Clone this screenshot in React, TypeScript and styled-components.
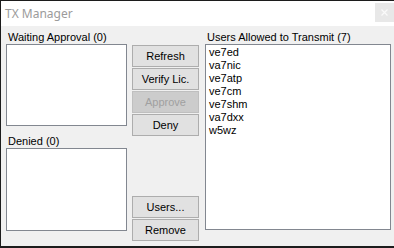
import React from 'react'
import styled, { createGlobalStyle } from 'styled-components'

const Global = createGlobalStyle`
  html, body {
    margin: 0;
    padding: 0;
    background: #f0f0f0;
  }
`

const Window = styled.div`
  width: 394px;
  height: 248px;
  box-sizing: border-box;
  border-top: 1px solid #1c1c1c;
  border-left: 1px solid #1c1c1c;
  border-bottom: 2px solid #1c1c1c;
  display: flex;
  flex-direction: column;
  font-family: 'Liberation Sans', Arial, sans-serif;
  font-size: 11px;
  color: #000;
  overflow: hidden;
`

const TitleBar = styled.div`
  height: 25px;
  background: #fff;
  display: flex;
  align-items: flex-start;
  justify-content: space-between;
`

const Title = styled.div`
  font-family: 'Segoe UI', 'Noto Sans', sans-serif;
  font-size: 12px;
  color: #9b9b9b;
  padding-left: 4px;
  line-height: 25px;
`

const CloseButton = styled.div`
  width: 19px;
  height: 19px;
  margin-top: 2px;
  background: #e8e8e8;
  display: flex;
  align-items: center;
  justify-content: center;
`

const Body = styled.div`
  flex: 1;
  background: #f0f0f0;
  display: grid;
  grid-template-columns: 121px 68px 186px;
  column-gap: 5px;
  padding: 5px 0 0 5px;
`

const Column = styled.div`
  display: flex;
  flex-direction: column;
`

const Label = styled.div<{ $gap?: number }>`
  height: 13px;
  line-height: 13px;
  padding-left: 2px;
  margin-top: ${(p) => p.$gap ?? 0}px;
  white-space: nowrap;
`

const ListBox = styled.div<{ $h: number }>`
  height: ${(p) => p.$h}px;
  box-sizing: border-box;
  background: #fff;
  border: 1px solid #828790;
  padding: 1px 3px;
`

const Item = styled.div`
  line-height: 13px;
  height: 13px;
`

const ButtonStack = styled.div<{ $top: number }>`
  width: 67px;
  display: flex;
  flex-direction: column;
  gap: 1px;
  margin-top: ${(p) => p.$top}px;
`

const Button = styled.div<{ $disabled?: boolean }>`
  height: 22px;
  box-sizing: border-box;
  border: 1px solid ${(p) => (p.$disabled ? '#bfbfbf' : '#adadad')};
  background: ${(p) => (p.$disabled ? '#cccccc' : '#e1e1e1')};
  color: ${(p) => (p.$disabled ? '#a0a0a0' : '#000')};
  display: flex;
  align-items: center;
  justify-content: center;
`

const users = ['ve7ed', 'va7nic', 've7atp', 've7cm', 've7shm', 'va7dxx', 'w5wz']

export default function App() {
  return (
    <>
      <Global />
      <Window>
        <TitleBar>
          <Title>TX Manager</Title>
          <CloseButton>
            <svg width="7" height="7" viewBox="0 0 7 7">
              <path d="M0.5 0.5 L6.5 6.5 M6.5 0.5 L0.5 6.5" stroke="#fafafa" strokeWidth="1.2" />
            </svg>
          </CloseButton>
        </TitleBar>
        <Body>
          <Column>
            <Label>Waiting Approval (0)</Label>
            <ListBox $h={82} />
            <Label $gap={9}>Denied (0)</Label>
            <ListBox $h={83} />
          </Column>
          <Column>
            <ButtonStack $top={14}>
              <Button>Refresh</Button>
              <Button>Verify Lic.</Button>
              <Button $disabled>Approve</Button>
              <Button>Deny</Button>
            </ButtonStack>
            <ButtonStack $top={60}>
              <Button>Users...</Button>
              <Button>Remove</Button>
            </ButtonStack>
          </Column>
          <Column>
            <Label>Users Allowed to Transmit (7)</Label>
            <ListBox $h={186}>
              {users.map((u) => (
                <Item key={u}>{u}</Item>
              ))}
            </ListBox>
          </Column>
        </Body>
      </Window>
    </>
  )
}
